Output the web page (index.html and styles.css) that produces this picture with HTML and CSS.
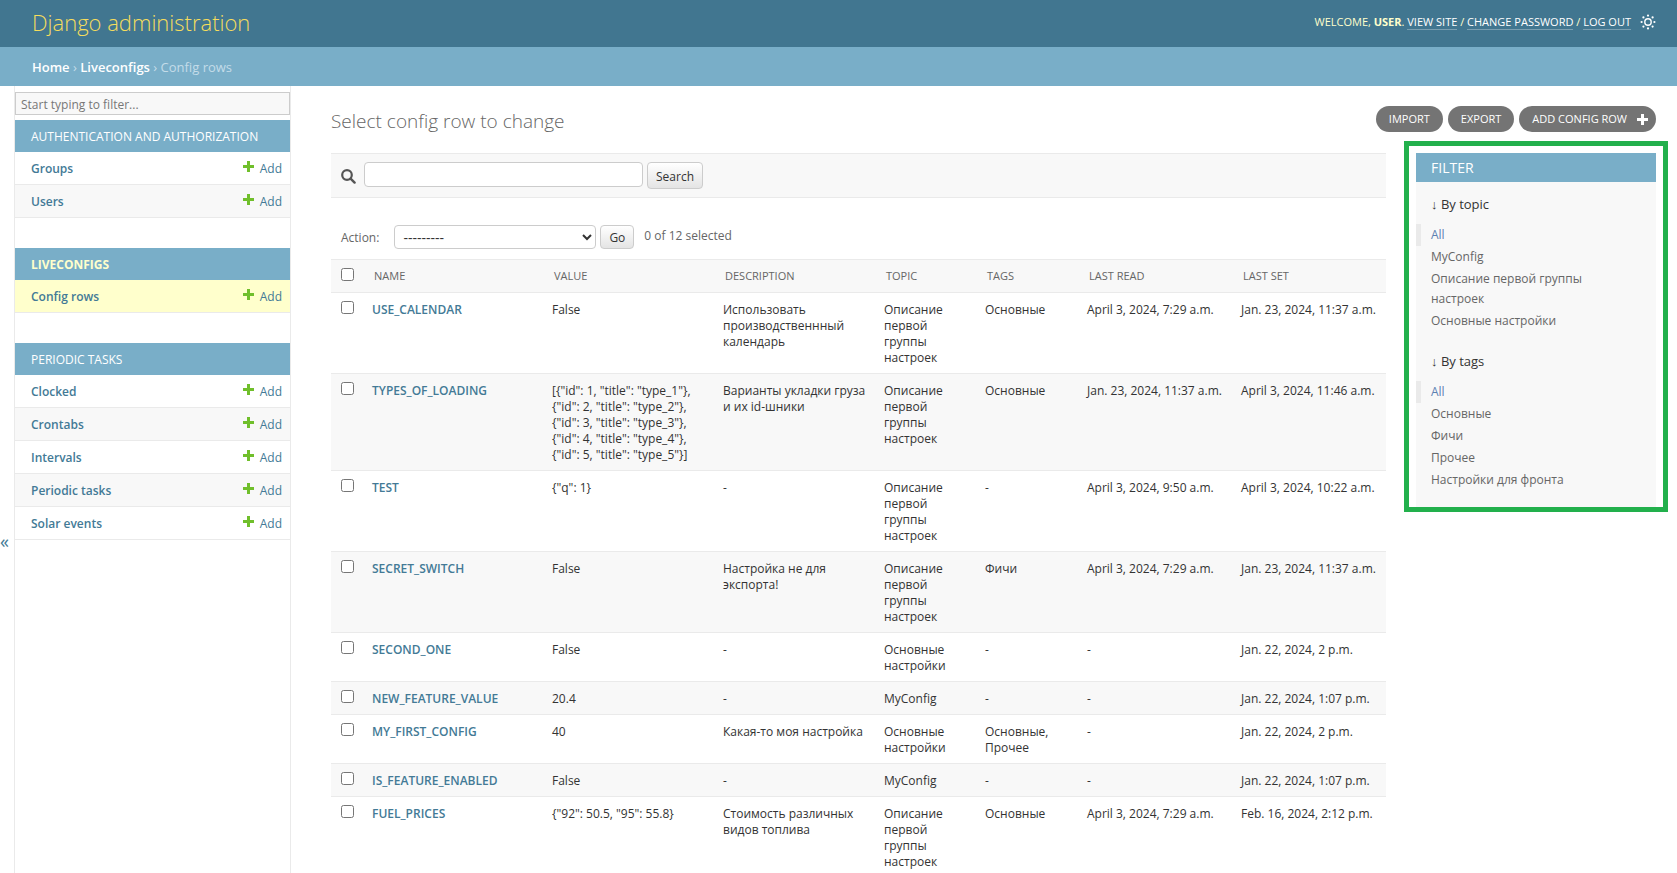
FILE: index.html
```
<!DOCTYPE html>
<html lang="en">
<head>
<meta charset="utf-8">
<title>Select config row to change | Django administration</title>
<link rel="stylesheet" href="styles.css">
</head>
<body>
<svg class="sprite" aria-hidden="true">
  <symbol id="plus" viewBox="0 0 11 11"><path d="M4 0h3v4h4v3H7v4H4V7H0V4h4z"/></symbol>
</svg>
<div class="container">
  <header class="header">
    <a class="site-name" href="#">Django administration</a>
    <div class="user-tools">
      <span>Welcome, <strong>user</strong>. <a href="#">View site</a> / <a href="#">Change password</a> / <a href="#">Log out</a></span>
      <button class="theme-toggle" type="button" aria-label="Toggle theme">
        <svg viewBox="0 0 16 16" width="16" height="16"><circle cx="8" cy="8" r="3.2" fill="none" stroke="currentColor" stroke-width="1.4"/><g fill="currentColor"><circle cx="8" cy="1.6" r="1.1"/><circle cx="8" cy="14.4" r="1.1"/><circle cx="1.6" cy="8" r="1.1"/><circle cx="14.4" cy="8" r="1.1"/><circle cx="3.4" cy="3.4" r="1.1"/><circle cx="12.6" cy="3.4" r="1.1"/><circle cx="3.4" cy="12.6" r="1.1"/><circle cx="12.6" cy="12.6" r="1.1"/></g></svg>
      </button>
    </div>
  </header>
  <nav class="breadcrumbs" aria-label="Breadcrumbs"><a href="#">Home</a> › <a href="#">Liveconfigs</a> › Config rows</nav>
  <div class="main">
    <button class="nav-toggle" type="button" aria-label="Toggle navigation"><span>«</span></button>
    <nav class="sidebar" aria-label="Sidebar">
      <input class="nav-filter" type="search" placeholder="Start typing to filter..." aria-label="Filter navigation items">
      <section class="module">
        <h2><a href="#">Authentication and Authorization</a></h2>
        <ul>
          <li><a class="model" href="#">Groups</a><a class="add" href="#"><svg><use href="#plus"/></svg>Add</a></li>
          <li><a class="model" href="#">Users</a><a class="add" href="#"><svg><use href="#plus"/></svg>Add</a></li>
        </ul>
      </section>
      <section class="module current">
        <h2><a href="#">Liveconfigs</a></h2>
        <ul>
          <li><a class="model" href="#">Config rows</a><a class="add" href="#"><svg><use href="#plus"/></svg>Add</a></li>
        </ul>
      </section>
      <section class="module">
        <h2><a href="#">Periodic Tasks</a></h2>
        <ul>
          <li><a class="model" href="#">Clocked</a><a class="add" href="#"><svg><use href="#plus"/></svg>Add</a></li>
          <li><a class="model" href="#">Crontabs</a><a class="add" href="#"><svg><use href="#plus"/></svg>Add</a></li>
          <li><a class="model" href="#">Intervals</a><a class="add" href="#"><svg><use href="#plus"/></svg>Add</a></li>
          <li><a class="model" href="#">Periodic tasks</a><a class="add" href="#"><svg><use href="#plus"/></svg>Add</a></li>
          <li><a class="model" href="#">Solar events</a><a class="add" href="#"><svg><use href="#plus"/></svg>Add</a></li>
        </ul>
      </section>
    </nav>
    <main class="content">
      <div class="title-row">
        <h1>Select config row to change</h1>
        <div class="object-tools">
          <a href="#">Import</a>
          <a href="#">Export</a>
          <a class="add-link" href="#">Add config row <svg><use href="#plus"/></svg></a>
        </div>
      </div>
      <div class="changelist">
        <div class="list">
          <form class="toolbar">
            <label for="searchbar"><svg viewBox="0 0 15 15" width="15" height="15"><title>Search</title><circle cx="6" cy="6" r="4.8" fill="none" stroke="#555" stroke-width="2.2"/><path d="M9.6 9.6l4 4" stroke="#555" stroke-width="2.4" stroke-linecap="round"/></svg></label>
            <input id="searchbar" type="text">
            <button class="button" type="submit">Search</button>
          </form>
          <form class="actions">
            <label for="action">Action:</label>
            <select id="action"><option>---------</option></select>
            <button class="button" type="submit">Go</button>
            <span class="counter">0 of 12 selected</span>
          </form>
          <table class="results">
            <colgroup><col class="c-check"><col class="c-name"><col class="c-value"><col class="c-desc"><col class="c-topic"><col class="c-tags"><col class="c-read"><col class="c-set"></colgroup>
            <thead>
              <tr><th><input type="checkbox" aria-label="Select all"></th><th>Name</th><th>Value</th><th>Description</th><th>Topic</th><th>Tags</th><th>Last read</th><th>Last set</th></tr>
            </thead>
            <tbody>
              <tr><td><input type="checkbox" aria-label="Select USE_CALENDAR"></td><th><a href="#">USE_CALENDAR</a></th><td>False</td><td>Использовать производственнный календарь</td><td>Описание первой группы настроек</td><td>Основные</td><td>April 3, 2024, 7:29 a.m.</td><td>Jan. 23, 2024, 11:37 a.m.</td></tr>
              <tr><td><input type="checkbox" aria-label="Select TYPES_OF_LOADING"></td><th><a href="#">TYPES_OF_LOADING</a></th><td>[{"id": 1, "title": "type_1"},<br>{"id": 2, "title": "type_2"},<br>{"id": 3, "title": "type_3"},<br>{"id": 4, "title": "type_4"},<br>{"id": 5, "title": "type_5"}]</td><td>Варианты укладки груза и их id-шники</td><td>Описание первой группы настроек</td><td>Основные</td><td>Jan. 23, 2024, 11:37 a.m.</td><td>April 3, 2024, 11:46 a.m.</td></tr>
              <tr><td><input type="checkbox" aria-label="Select TEST"></td><th><a href="#">TEST</a></th><td>{"q": 1}</td><td>-</td><td>Описание первой группы настроек</td><td>-</td><td>April 3, 2024, 9:50 a.m.</td><td>April 3, 2024, 10:22 a.m.</td></tr>
              <tr><td><input type="checkbox" aria-label="Select SECRET_SWITCH"></td><th><a href="#">SECRET_SWITCH</a></th><td>False</td><td>Настройка не для экспорта!</td><td>Описание первой группы настроек</td><td>Фичи</td><td>April 3, 2024, 7:29 a.m.</td><td>Jan. 23, 2024, 11:37 a.m.</td></tr>
              <tr><td><input type="checkbox" aria-label="Select SECOND_ONE"></td><th><a href="#">SECOND_ONE</a></th><td>False</td><td>-</td><td>Основные настройки</td><td>-</td><td>-</td><td>Jan. 22, 2024, 2 p.m.</td></tr>
              <tr><td><input type="checkbox" aria-label="Select NEW_FEATURE_VALUE"></td><th><a href="#">NEW_FEATURE_VALUE</a></th><td>20.4</td><td>-</td><td>MyConfig</td><td>-</td><td>-</td><td>Jan. 22, 2024, 1:07 p.m.</td></tr>
              <tr><td><input type="checkbox" aria-label="Select MY_FIRST_CONFIG"></td><th><a href="#">MY_FIRST_CONFIG</a></th><td>40</td><td>Какая-то моя настройка</td><td>Основные настройки</td><td>Основные, Прочее</td><td>-</td><td>Jan. 22, 2024, 2 p.m.</td></tr>
              <tr><td><input type="checkbox" aria-label="Select IS_FEATURE_ENABLED"></td><th><a href="#">IS_FEATURE_ENABLED</a></th><td>False</td><td>-</td><td>MyConfig</td><td>-</td><td>-</td><td>Jan. 22, 2024, 1:07 p.m.</td></tr>
              <tr><td><input type="checkbox" aria-label="Select FUEL_PRICES"></td><th><a href="#">FUEL_PRICES</a></th><td>{"92": 50.5, "95": 55.8}</td><td>Стоимость различных видов топлива</td><td>Описание первой группы настроек</td><td>Основные</td><td>April 3, 2024, 7:29 a.m.</td><td>Feb. 16, 2024, 2:12 p.m.</td></tr>
            </tbody>
          </table>
        </div>
        <aside class="highlight">
          <div class="filter">
            <h2>Filter</h2>
            <h3><span class="arrow">↓</span> By topic</h3>
            <ul>
              <li class="selected"><a href="#">All</a></li>
              <li><a href="#">MyConfig</a></li>
              <li><a href="#">Описание первой группы настроек</a></li>
              <li><a href="#">Основные настройки</a></li>
            </ul>
            <h3><span class="arrow">↓</span> By tags</h3>
            <ul>
              <li class="selected"><a href="#">All</a></li>
              <li><a href="#">Основные</a></li>
              <li><a href="#">Фичи</a></li>
              <li><a href="#">Прочее</a></li>
              <li><a href="#">Настройки для фронта</a></li>
            </ul>
          </div>
        </aside>
      </div>
    </main>
  </div>
</div>
</body>
</html>
```
FILE: styles.css
```
* { box-sizing: border-box; }

body {
  margin: 0;
  background: #fff;
  color: #333;
  font: 12px/16px "Open Sans", "Noto Sans", sans-serif;
}

a { color: #437a96; text-decoration: none; }
ul { list-style: none; margin: 0; padding: 0; }
h1, h2, h3 { margin: 0; font-weight: 400; }
input, select, button { font: inherit; color: inherit; margin: 0; }
.sprite { display: none; }

.container {
  display: flex;
  flex-direction: column;
  height: 100vh;
  overflow: hidden;
}

.header {
  display: flex;
  justify-content: space-between;
  align-items: center;
  flex: none;
  height: 47px;
  padding: 0 21px 4px 32px;
  background: #417690;
  color: #ffc;
}
.site-name { color: #f5dd5d; font-size: 22px; line-height: 30px; font-weight: 300; }
.user-tools {
  display: flex;
  align-items: center;
  gap: 9px;
  font-size: 11px;
  line-height: 14px;
  text-transform: uppercase;
}
.user-tools a { color: #fff; border-bottom: 1px solid rgba(255, 255, 255, .3); }
.theme-toggle { display: flex; padding: 0; border: 0; background: none; color: #fff; }

.breadcrumbs {
  flex: none;
  height: 39px;
  padding: 0 32px;
  background: #79aec8;
  color: #c4dce8;
  font-size: 13px;
  line-height: 40px;
}
.breadcrumbs a { color: #fff; font-weight: 600; }

.main { display: flex; flex: 1; min-height: 0; }
.nav-toggle {
  flex: none;
  display: flex;
  align-items: center;
  width: 14px;
  padding: 122px 0 0;
  border: 0;
  background: #fff;
  color: #437a96;
  font-size: 18px;
}

.sidebar {
  flex: 0 0 277px;
  padding-top: 6px;
  border: 1px solid #eaeaea;
  border-width: 0 1px;
}
.nav-filter {
  display: block;
  width: 100%;
  height: 23px;
  margin-bottom: 5px;
  padding: 3px 5px 1px;
  border: 1px solid #ccc;
  background: #f8f8f8;
}
.nav-filter::placeholder { color: #777; opacity: 1; }
.module { margin-bottom: 30px; }
.module h2 { padding: 9px 16px 7px; background: #79aec8; font-size: 12px; line-height: 16px; text-transform: uppercase; }
.module h2 a { color: #fff; }
.module li {
  display: flex;
  justify-content: space-between;
  padding: 9px 8px 7px 16px;
  border-bottom: 1px solid #eaeaea;
}
.module li:nth-child(even) { background: #f8f8f8; }
.model { font-weight: 600; }
.add svg { width: 11px; height: 11px; margin-right: 6px; vertical-align: 1px; fill: #70bf2b; }
.current h2 a { color: #ffc; font-weight: 700; }
.module.current li { background: #ffc; }

.content { flex: 1; min-width: 0; padding: 20px 21px 0 40px; }
.title-row { display: flex; justify-content: space-between; align-items: flex-start; height: 47px; }
h1 { font-size: 19px; line-height: 30px; font-weight: 300; color: #666; }
.object-tools { display: flex; gap: 5px; }
.object-tools a {
  display: flex;
  align-items: center;
  gap: 10px;
  height: 26px;
  padding: 0 13px;
  border-radius: 13px;
  background: #747474;
  color: #fff;
  font-size: 11px;
  text-transform: uppercase;
}
.object-tools .add-link { padding: 0 8px 0 13px; }
.object-tools svg { width: 11px; height: 11px; fill: #fff; }

.changelist { display: flex; align-items: flex-start; gap: 18px; }
.list { flex: 1; min-width: 0; }
.toolbar {
  display: flex;
  align-items: flex-start;
  height: 45px;
  padding: 8px 10px;
  border: 1px solid #eaeaea;
  border-width: 1px 0;
  background: #f8f8f8;
}
.toolbar label { display: flex; padding: 7px 8px 0 0; }
.toolbar input { width: 279px; height: 25px; margin-right: 4px; padding: 2px 6px; border: 1px solid #ccc; border-radius: 4px; background: #fff; }
.button {
  height: 27px;
  padding: 2px 8px 0;
  border: 1px solid #ccc;
  border-radius: 4px;
  background: linear-gradient(#fff, #e4e4e4);
}
.actions { display: flex; align-items: center; padding: 27px 10px 10px; color: #666; }
.actions label { padding-top: 2px; }
.actions select { width: 202px; height: 24px; margin: 0 4px 0 15px; padding: 0 4px; border: 1px solid #ccc; border-radius: 4px; background: #fff; color: #333; font-size: 14px; }
.actions .button { height: 24px; color: #333; }
.counter { margin-left: 10px; padding-bottom: 2px; }

.results { width: 100%; table-layout: fixed; border-collapse: collapse; }
.results th, .results td { padding: 9px 8px 7px; border-bottom: 1px solid #eaeaea; text-align: left; vertical-align: top; }
.results td:nth-last-child(-n+2) { white-space: nowrap; }
.results thead th { padding: 8px 10px; border-top: 1px solid #eaeaea; background: #f8f8f8; color: #666; font-size: 11px; font-weight: 500; text-transform: uppercase; }
.results tbody th { font-weight: 600; }
.results tbody tr:nth-child(even) { background: #f8f8f8; }
.results tr > :first-child { padding: 8px 8px 8px 10px; }
.results input { display: block; width: 13px; height: 13px; }
.c-check { width: 33px; }
.c-name { width: 180px; }
.c-value { width: 171px; }
.c-desc { width: 161px; }
.c-topic { width: 101px; }
.c-tags { width: 102px; }
.c-read { width: 154px; }
.c-set { width: 153px; }

.highlight { flex: 0 0 264px; margin: -12px -12px 0 0; padding: 7px 7px 0; border: 5px solid #22b04c; }
.filter { padding-bottom: 16px; background: #f8f8f8; }
.filter h2 { padding: 5px 15px 4px; background: #79aec8; color: #fff; font-size: 14px; line-height: 20px; text-transform: uppercase; }
.filter h3 { padding: 12px 15px 9px; font-size: 13px; line-height: 20px; }
.filter ul + h3 { padding-top: 19px; }
.arrow { font-family: "Liberation Sans", sans-serif; }
.filter li { padding: 1px 60px 1px 15px; line-height: 20px; }
.filter li a { color: #666; }
.filter .selected { padding-left: 10px; border-left: 5px solid #eaeaea; }
.filter .selected a { color: #5b80b2; }
```
